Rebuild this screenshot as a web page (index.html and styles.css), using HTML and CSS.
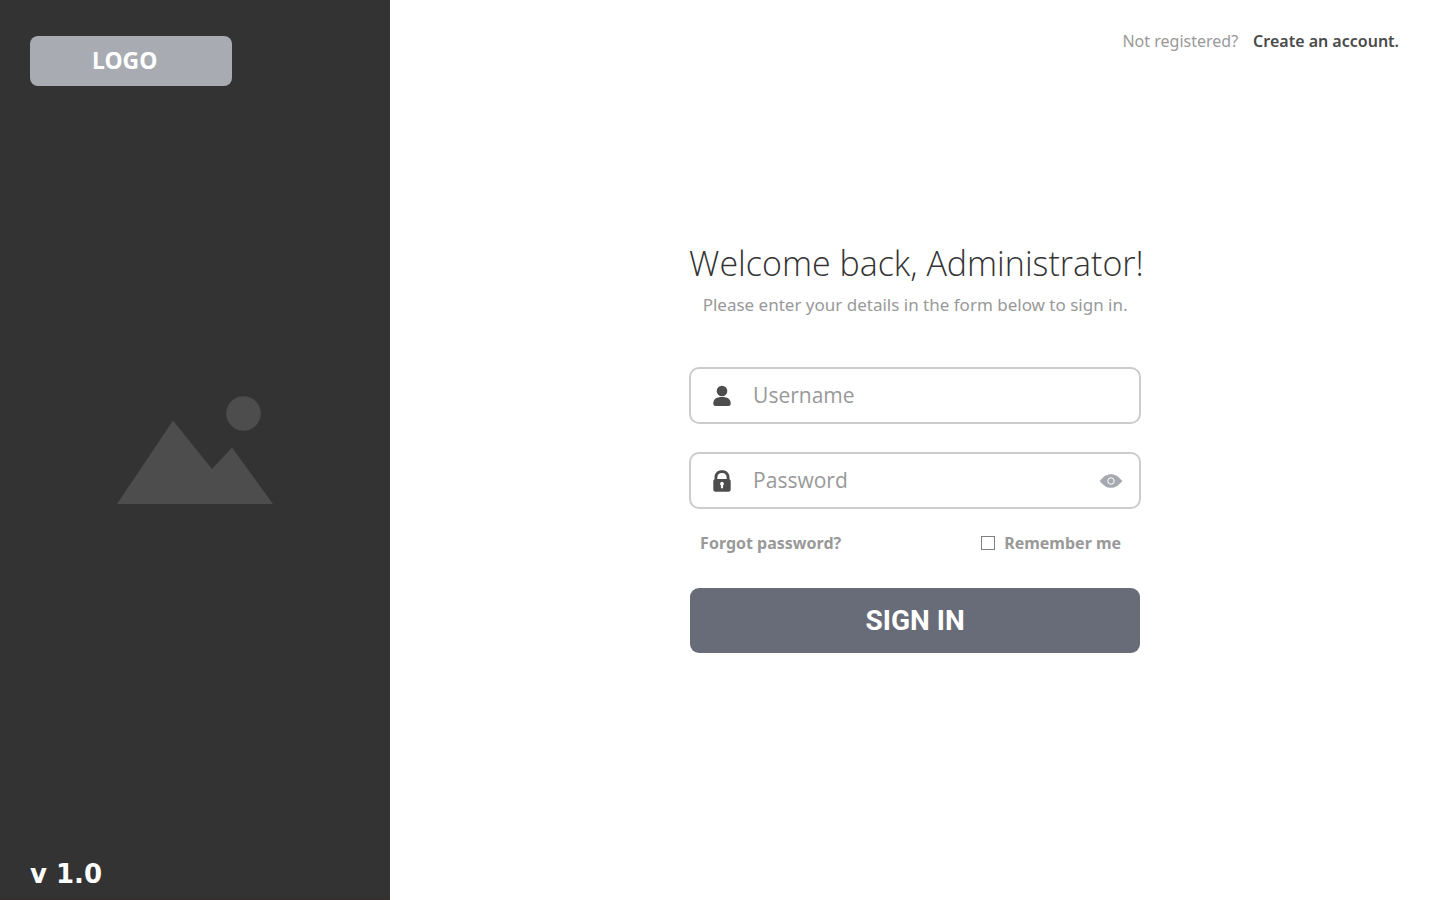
FILE: index.html
```html
<!DOCTYPE html>
<html lang="en">
<head>
<meta charset="utf-8">
<meta name="viewport" content="width=device-width, initial-scale=1">
<title>Sign in</title>
<link rel="stylesheet" href="styles.css">
</head>
<body class="page">
<aside class="sidebar">
  <div class="logo">LOGO</div>
  <svg class="picture" viewBox="0 0 156 108" aria-hidden="true">
    <path d="M0 108 56 24.500 95 73 115 51.500 156 108Z"/>
    <circle cx="126.500" cy="17.500" r="17.300"/>
  </svg>
  <p class="version">v 1.0</p>
</aside>
<main class="main">
  <header class="topbar">
    <span>Not registered?</span>
    <a class="create" href="#">Create an account.</a>
  </header>
  <form class="form">
    <h1 class="title">Welcome back, Administrator!</h1>
    <p class="subtitle">Please enter your details in the form below to sign in.</p>
    <div class="fields">
      <div class="field">
        <svg class="icon" viewBox="0 0 18 22" aria-hidden="true">
          <circle cx="9" cy="6" r="5.300"/>
          <path d="M.3 18.500C.3 14 3.500 12 9 12S17.700 14 17.700 18.500C17.700 20.300 16.700 21 15.200 21H2.800C1.300 21 .3 20.300.3 18.500Z"/>
        </svg>
        <input class="input" type="text" placeholder="Username" aria-label="Username">
      </div>
      <div class="field">
        <svg class="icon" viewBox="0 0 18 22" aria-hidden="true">
          <path fill-rule="evenodd" d="M1.500 9.300V7.500C1.500 3 4.500.3 9 .3s7.500 2.700 7.500 7.200v1.800c.8.300 1.200.9 1.200 1.700v8.500c0 1.400-.8 2.200-2.200 2.200h-13C1.100 21.700.3 20.900.3 19.500V11c0-.8.400-1.400 1.200-1.700ZM4.300 9h9.400V7.800C13.700 4.900 12 3 9 3S4.300 4.900 4.300 7.800Z"/>
          <path class="keyhole" d="M9 11.800a2 2 0 0 0-1.100 3.600V17.500a1.100 1.100 0 0 0 2.200 0V15.400A2 2 0 0 0 9 11.800Z"/>
        </svg>
        <input class="input" type="password" placeholder="Password" aria-label="Password">
        <button class="reveal" type="button" aria-label="Show password">
          <svg class="eye" viewBox="0 0 24 16" aria-hidden="true">
            <path d="M.7 8C4.500 3.200 8 1.200 12 1.200S19.500 3.200 23.300 8C19.500 12.800 16 14.800 12 14.800S4.500 12.800.7 8Z"/>
            <circle class="pupil" cx="12" cy="8" r="3.200"/>
          </svg>
        </button>
      </div>
    </div>
    <div class="options">
      <a class="forgot" href="#">Forgot password?</a>
      <label class="remember"><input class="check" type="checkbox">Remember me</label>
    </div>
    <button class="submit" type="submit">SIGN IN</button>
  </form>
</main>
</body>
</html>
```

FILE: styles.css
```css
* { box-sizing: border-box; }

.page {
  display: grid;
  grid-template-columns: 27.1% 1fr;
  min-height: 100vh;
  margin: 0;
  background: #fff;
  color: #999;
  font-family: "Noto Sans", "Open Sans", sans-serif;
}

.sidebar {
  display: grid;
  grid-template-rows: 1fr auto 1fr;
  padding: 36px 30px 8px;
  border-bottom: 2px solid #352f30;
  background: #333;
  color: #fff;
}

.logo {
  align-self: start;
  width: 202px;
  padding: 8px 62px 10px;
  border-radius: 8px;
  background: #a8abb2;
  font-size: 23px;
  font-weight: 700;
  line-height: 32px;
}

.picture {
  justify-self: center;
  width: 156px;
  height: 108px;
  margin-bottom: 26px;
  fill: #4d4d4d;
}

.version {
  align-self: end;
  margin: 0;
  font: 700 26px/32px "DejaVu Sans", sans-serif;
}

.main {
  display: grid;
  grid-template-rows: 1fr auto 1fr;
  justify-items: center;
}

.topbar {
  display: flex;
  align-self: start;
  justify-self: end;
  gap: 15px;
  padding: 29px 41px;
  font-size: 16px;
  line-height: 24px;
}

.create {
  color: #4a4a4a;
  font-weight: 600;
  text-decoration: none;
}

.form {
  display: flex;
  flex-direction: column;
  align-items: stretch;
  width: 100%;
  max-width: 452px;
}

.title {
  margin: 0;
  color: #333;
  font-family: "Open Sans", sans-serif;
  font-size: 34px;
  font-weight: 300;
  line-height: 32px;
  text-align: center;
  white-space: nowrap;
}

.subtitle {
  margin: 14px 0 50px;
  font-size: 17px;
  line-height: 24px;
  text-align: center;
}

.fields {
  display: grid;
  gap: 28px;
}

.field {
  display: flex;
  align-items: center;
  height: 57px;
  padding: 0 16px 0 22px;
  border: 2px solid #ccc;
  border-radius: 10px;
}

.icon {
  flex: none;
  width: 18px;
  height: 22px;
  fill: #4d4d4d;
}

.keyhole { fill: #fff; }

.input {
  flex: 1;
  min-width: 0;
  height: 100%;
  padding: 0 0 2px 22px;
  border: 0;
  outline: 0;
  background: none;
  color: #333;
  font: 400 21px/32px "Open Sans", sans-serif;
}

.input::placeholder {
  color: #999;
  opacity: 1;
}

.reveal {
  display: flex;
  padding: 0;
  border: 0;
  background: none;
  cursor: pointer;
}

.eye {
  width: 24px;
  height: 16px;
  fill: #a6a9b0;
}

.pupil {
  fill: none;
  stroke: #fff;
}

.options {
  display: flex;
  justify-content: space-between;
  margin: 22px 0 33px;
  padding: 0 20px 0 11px;
  font-size: 16px;
  font-weight: 700;
  line-height: 24px;
}

.forgot {
  color: inherit;
  text-decoration: none;
}

.remember {
  display: flex;
  align-items: center;
  gap: 9px;
}

.check {
  width: 14px;
  height: 14px;
  margin: 0;
  border: 1px solid #808080;
  background: #fff;
  appearance: none;
}

.check:checked { background: #676c78; }

.submit {
  height: 65px;
  margin: 0 1px;
  border: 0;
  border-radius: 9px;
  background: #676c78;
  color: #fff;
  font: 700 28px/32px Roboto, sans-serif;
  cursor: pointer;
}
```
